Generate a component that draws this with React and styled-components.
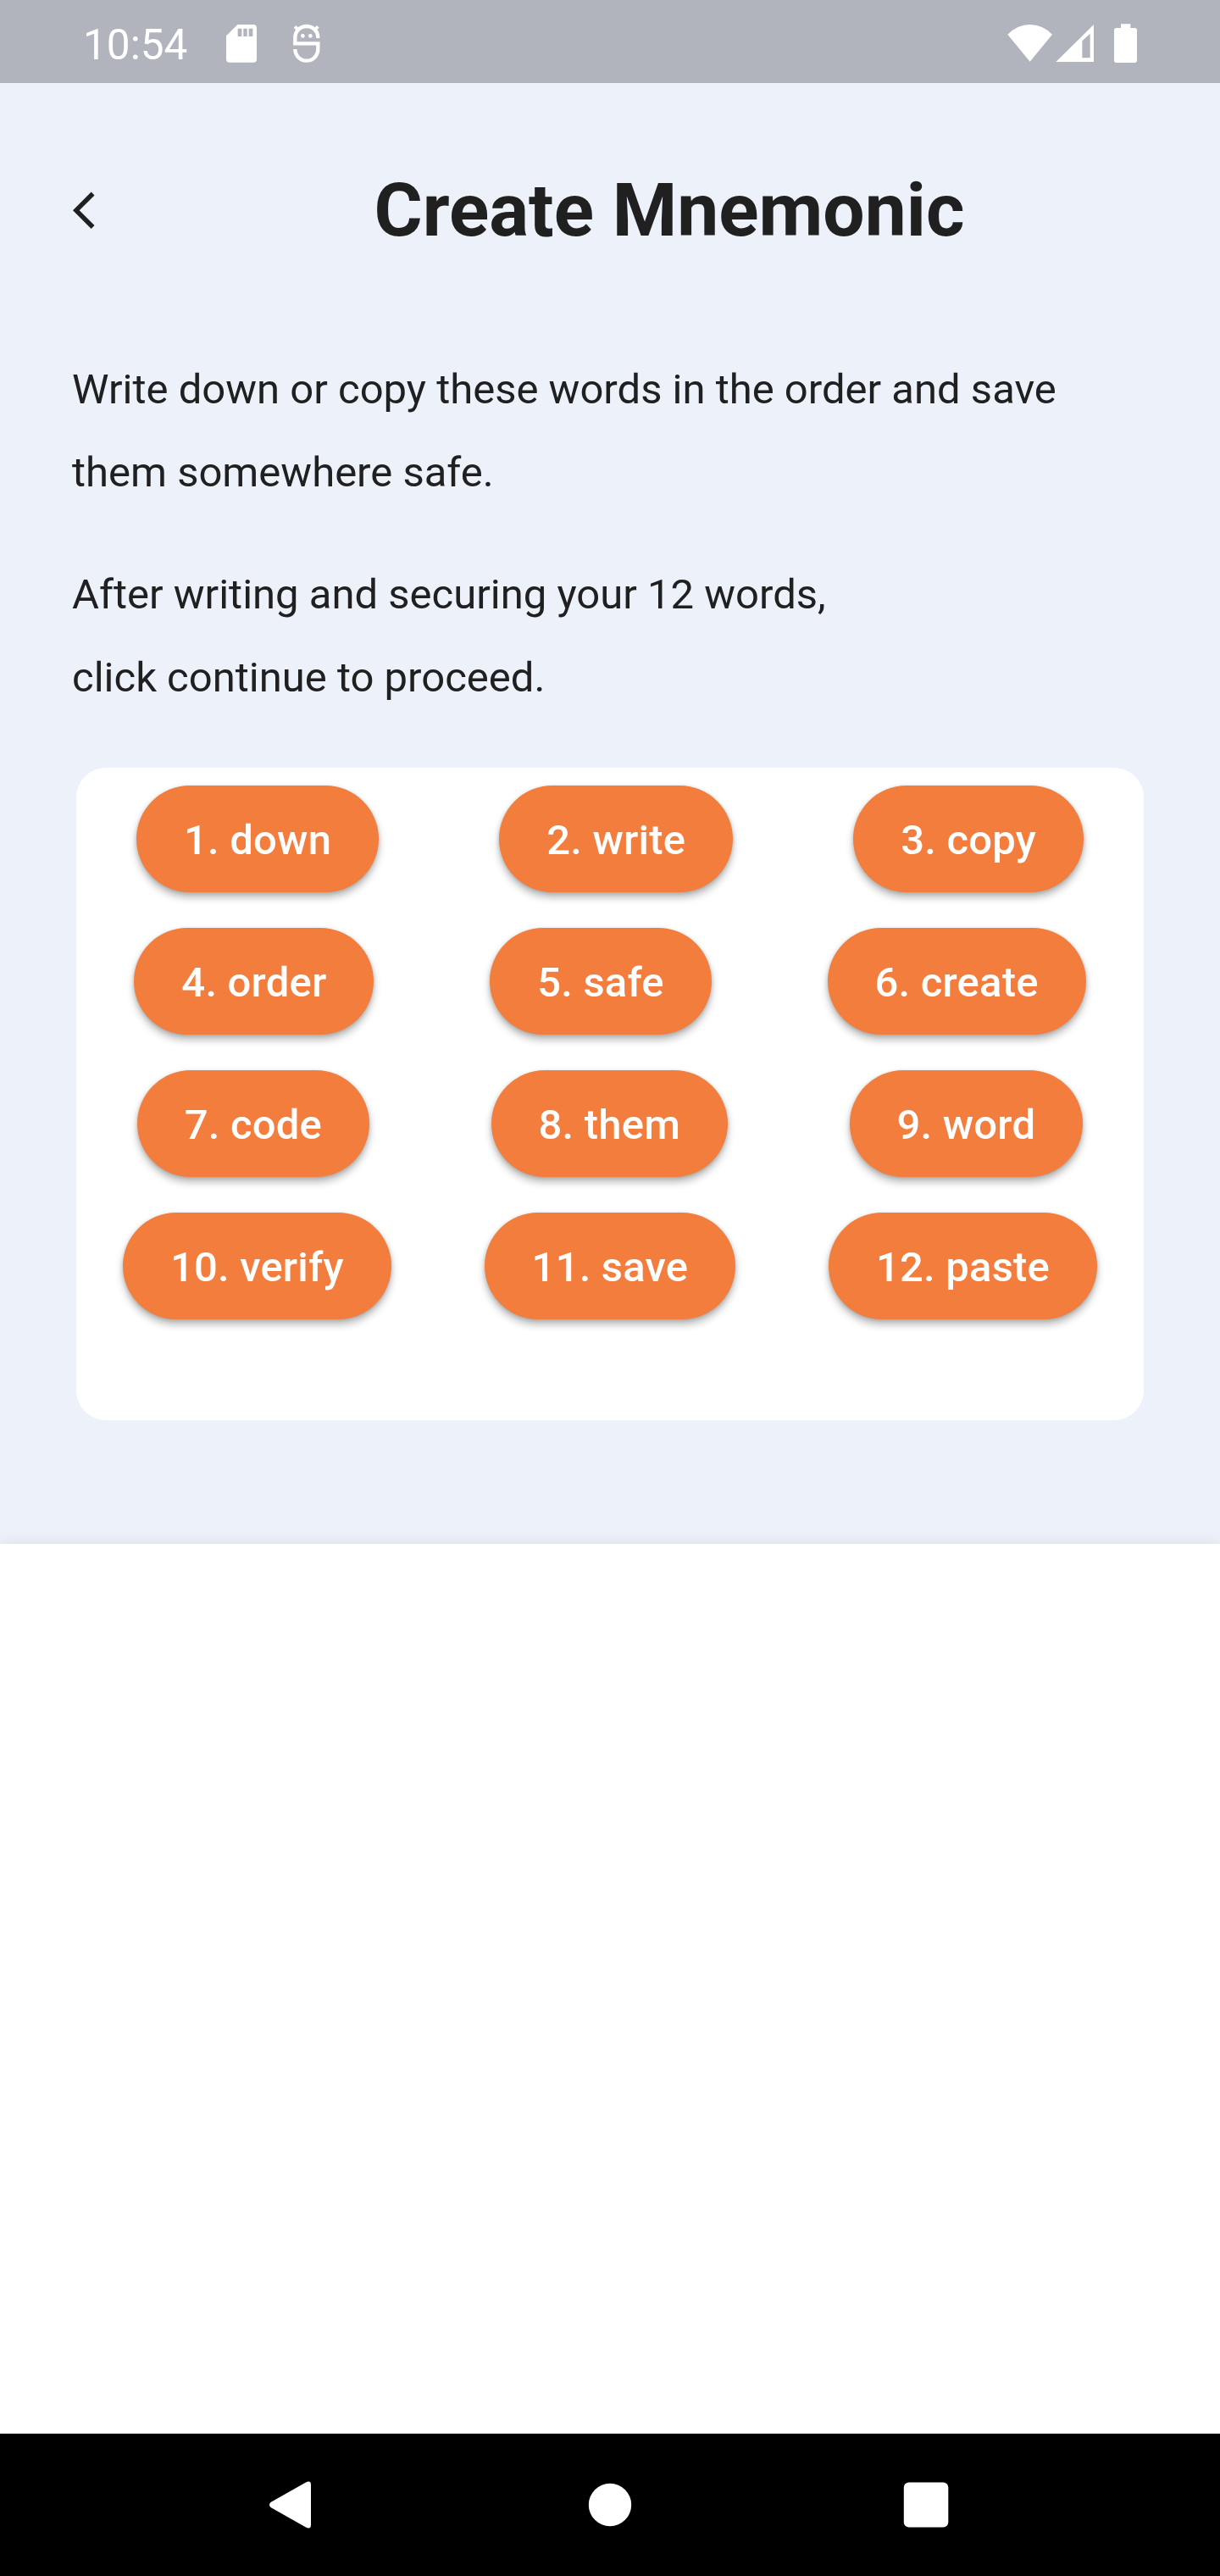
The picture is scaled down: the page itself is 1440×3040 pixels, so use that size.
import React from "react";
import styled, { createGlobalStyle } from "styled-components";

const GlobalStyle = createGlobalStyle`
  *, *::before, *::after { box-sizing: border-box; }
  body { margin: 0; background: #fff; font-family: Roboto, "Noto Sans", sans-serif; }
  svg { display: block; flex: none; }
`;

const Screen = styled.div`
  width: 1440px;
  height: 3040px;
  display: flex;
  flex-direction: column;
  overflow: hidden;
  color: #202021;
`;

const StatusBar = styled.header`
  flex: none;
  height: 98px;
  padding: 4px 98px 0;
  display: flex;
  align-items: center;
  background: #b1b4bc;
  color: #fff;
`;

const Clock = styled.time`
  width: 167px;
  padding-top: 4px;
  font-size: 49.5px;
  line-height: 58px;
`;

const NoticeIcons = styled.div`
  display: flex;
  align-items: center;
  gap: 40px;
`;

const SystemIcons = styled.div`
  margin-left: auto;
  display: flex;
  align-items: center;
`;

const Content = styled.main`
  flex: none;
  height: 1724px;
  background: #ecf1fa;
`;

const TitleBar = styled.div`
  height: 301px;
  padding: 0 84px 0 86px;
  display: flex;
  align-items: center;
`;

const BackButton = styled.button`
  width: 56px;
  padding: 0;
  border: 0;
  background: none;
  color: inherit;
`;

const Title = styled.h1`
  margin: 0;
  padding-left: 82px;
  flex: 1;
  font-size: 87.5px;
  line-height: 103px;
  font-weight: 700;
  text-align: center;
  white-space: nowrap;
`;

const Instructions = styled.section`
  padding: 12px 85px 0;
  display: flex;
  flex-direction: column;
  gap: 46px;
`;

const Paragraph = styled.p`
  margin: 0;
  font-size: 49px;
  line-height: 98px;
`;

const WordCard = styled.section`
  margin: 57px 90px 0;
  height: 770px;
  border-radius: 35px;
  background: #fff;
`;

const WordRow = styled.div`
  height: 168px;
  display: flex;
  align-items: center;
  justify-content: space-around;
`;

const WordButton = styled.button`
  height: 126px;
  padding: 3px 56px 0;
  border: 0;
  border-radius: 63px;
  background: #f27d3c;
  color: #fff;
  font: 500 49px/58px Roboto, "Noto Sans", sans-serif;
  letter-spacing: 0.2px;
  white-space: nowrap;
  box-shadow: 0 6px 10px rgba(0, 0, 0, 0.28), 0 1px 4px rgba(0, 0, 0, 0.14);
`;

const BottomSheet = styled.section`
  position: relative;
  flex: 1;
  background: #fff;
  box-shadow: 0 0 16px rgba(0, 0, 0, 0.09);
`;

const NavBar = styled.nav`
  position: relative;
  flex: none;
  height: 168px;
  display: flex;
  align-items: center;
  justify-content: center;
  gap: 310px;
  background: #000;
`;

const rows = [
  ["1. down", "2. write", "3. copy"],
  ["4. order", "5. safe", "6. create"],
  ["7. code", "8. them", "9. word"],
  ["10. verify", "11. save", "12. paste"],
];

const SdCardIcon = () => (
  <svg width="40" height="46" viewBox="0 0 120 138" fill="#fff">
    <path
      fillRule="evenodd"
      d="M46 3h56q12 0 12 12v110q0 12-12 12H18q-12 0-12-12V43zM47 17v28h14V17zm20 0v28h13V17zm19 0v28h14V17z"
    />
  </svg>
);

const DebugIcon = () => (
  <svg width="34" height="46" viewBox="857 84 102 138" fill="none" stroke="#fff">
    <path
      strokeWidth="13"
      d="M948 135v-2A40.500 40 0 0 0 867 133V154H948V174A40.500 41 0 0 1 867 174"
    />
    <path strokeWidth="11" d="M866 94l13 13M948 94l-13 13" />
    <circle cx="894" cy="127" r="7" fill="#fff" stroke="none" />
    <circle cx="921" cy="127" r="7" fill="#fff" stroke="none" />
  </svg>
);

const WifiIcon = () => (
  <svg width="54" height="46" viewBox="0 0 162 138" fill="#fff">
    <path d="M1 38Q36 3 80 3t79 35L80 134z" />
  </svg>
);

const SignalIcon = () => (
  <svg width="48" height="46" viewBox="0 0 144 138" fill="#fff">
    <path fillRule="evenodd" d="M4 135L138 3v132zM97 61v60h28V35z" />
  </svg>
);

const BatteryIcon = () => (
  <svg width="27" height="46" viewBox="0 0 81 138" fill="#fff">
    <path d="M24 1h34v14h15q8 0 8 8v107q0 8-8 8H8q-8 0-8-8V23q0-8 8-8h16z" />
  </svg>
);

const SignalSlot = styled.div`
  margin: 0 22px 0 2px;
`;

export default function App() {
  return (
    <>
      <GlobalStyle />
      <Screen>
        <StatusBar>
          <Clock>10:54</Clock>
          <NoticeIcons>
            <SdCardIcon />
            <DebugIcon />
          </NoticeIcons>
          <SystemIcons>
            <WifiIcon />
            <SignalSlot>
              <SignalIcon />
            </SignalSlot>
            <BatteryIcon />
          </SystemIcons>
        </StatusBar>
        <Content>
          <TitleBar>
            <BackButton aria-label="Back">
              <svg width="52.5" height="52.5" viewBox="0 0 24 24" fill="currentColor">
                <path d="M11.67 3.87L9.9 2.1 0 12l9.9 9.9 1.77-1.77L3.54 12z" />
              </svg>
            </BackButton>
            <Title>Create Mnemonic</Title>
          </TitleBar>
          <Instructions>
            <Paragraph>
              Write down or copy these words in the order and save
              <br />
              them somewhere safe.
            </Paragraph>
            <Paragraph>
              After writing and securing your 12 words,
              <br />
              click continue to proceed.
            </Paragraph>
          </Instructions>
          <WordCard>
            {rows.map((row) => (
              <WordRow key={row[0]}>
                {row.map((word) => (
                  <WordButton key={word}>{word}</WordButton>
                ))}
              </WordRow>
            ))}
          </WordCard>
        </Content>
        <BottomSheet />
        <NavBar>
          <svg width="64" height="64" viewBox="0 0 64 64" fill="#fff">
            <path d="M5.500 29L47 5.500Q53 2.500 53 8.500V55.500Q53 61.500 47 58.500L5.500 35Q2.500 32 5.500 29z" />
          </svg>
          <svg width="64" height="64" viewBox="0 0 64 64" fill="#fff">
            <circle cx="32" cy="32" r="25.200" />
          </svg>
          <svg width="64" height="64" viewBox="0 0 64 64" fill="#fff">
            <rect x="4.800" y="5.500" width="52.500" height="53" rx="6" />
          </svg>
        </NavBar>
      </Screen>
    </>
  );
}
